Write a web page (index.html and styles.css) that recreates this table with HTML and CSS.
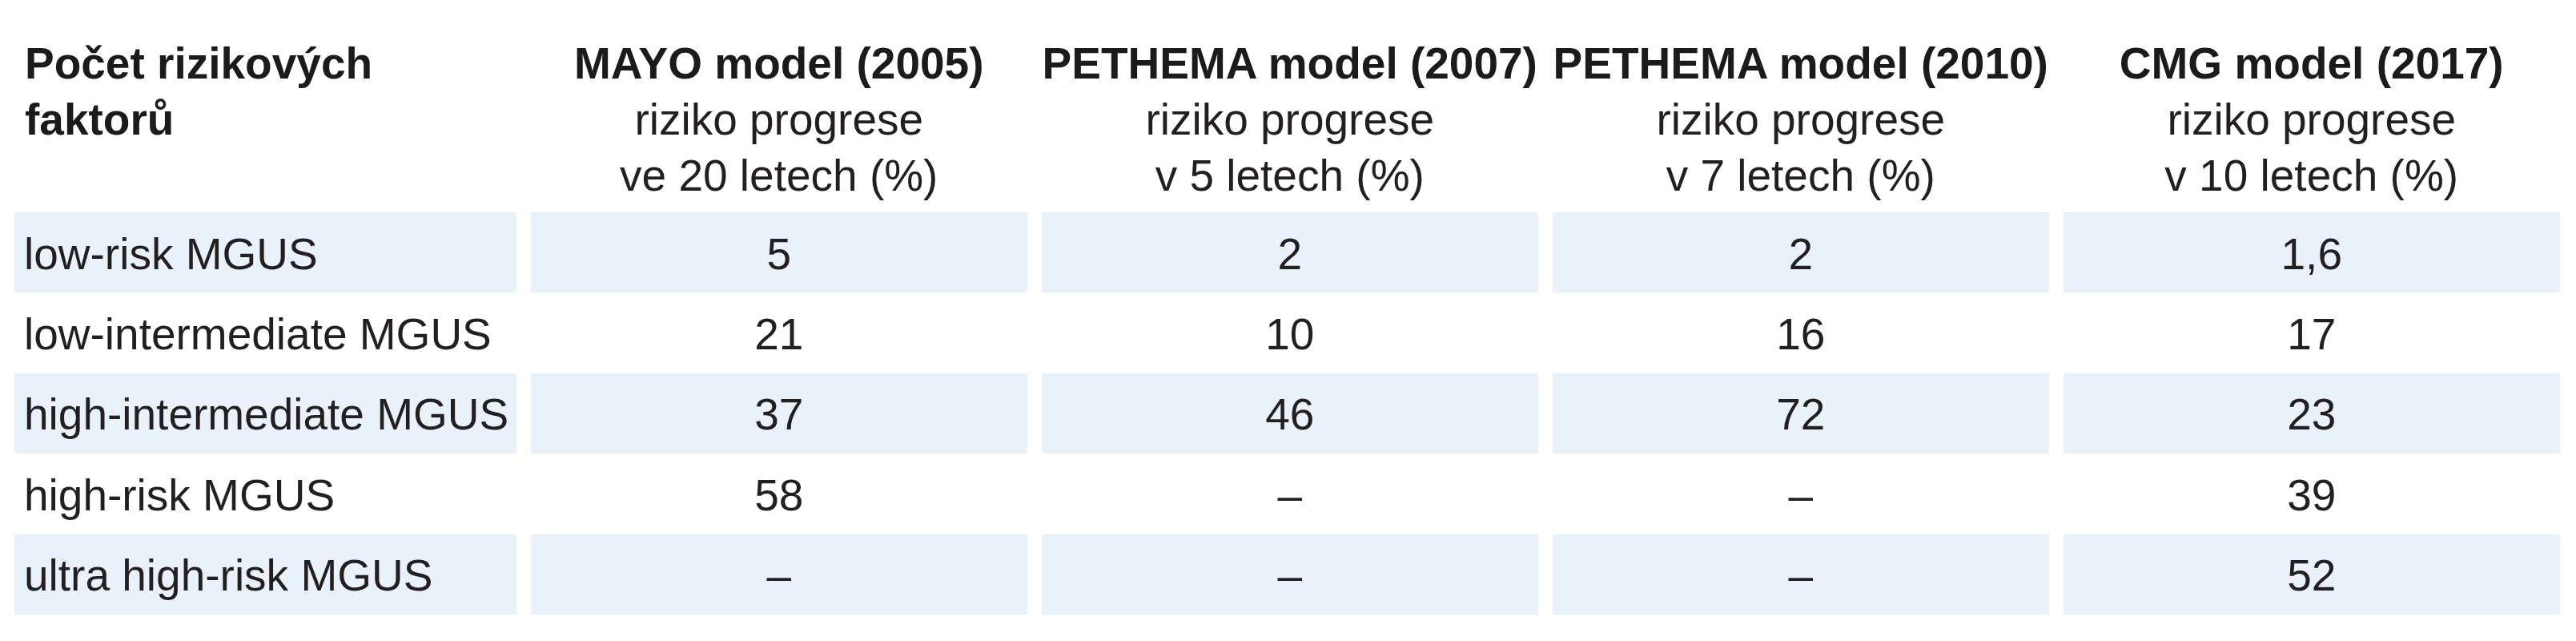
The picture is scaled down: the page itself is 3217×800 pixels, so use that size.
FILE: index.html
```html
<!DOCTYPE html>
<html lang="cs">
<head>
<meta charset="utf-8">
<title>Modely rizika progrese MGUS</title>
<link rel="stylesheet" href="styles.css">
</head>
<body>
<div class="risk-table">
  <div class="row head">
    <div class="cell first"><span class="title">Počet rizikových</span><span class="title">faktorů</span></div>
    <div class="cell"><span class="title">MAYO model (2005)</span><span>riziko progrese</span><span>ve 20 letech (%)</span></div>
    <div class="cell"><span class="title">PETHEMA model (2007)</span><span>riziko progrese</span><span>v 5 letech (%)</span></div>
    <div class="cell"><span class="title">PETHEMA model (2010)</span><span>riziko progrese</span><span>v 7 letech (%)</span></div>
    <div class="cell"><span class="title">CMG model (2017)</span><span>riziko progrese</span><span>v 10 letech (%)</span></div>
  </div>
  <div class="row data shaded">
    <div class="cell label">low-risk MGUS</div>
    <div class="cell">5</div>
    <div class="cell">2</div>
    <div class="cell">2</div>
    <div class="cell">1,6</div>
  </div>
  <div class="row data">
    <div class="cell label">low-intermediate MGUS</div>
    <div class="cell">21</div>
    <div class="cell">10</div>
    <div class="cell">16</div>
    <div class="cell">17</div>
  </div>
  <div class="row data shaded">
    <div class="cell label">high-intermediate MGUS</div>
    <div class="cell">37</div>
    <div class="cell">46</div>
    <div class="cell">72</div>
    <div class="cell">23</div>
  </div>
  <div class="row data">
    <div class="cell label">high-risk MGUS</div>
    <div class="cell">58</div>
    <div class="cell">–</div>
    <div class="cell">–</div>
    <div class="cell">39</div>
  </div>
  <div class="row data shaded">
    <div class="cell label">ultra high-risk MGUS</div>
    <div class="cell">–</div>
    <div class="cell">–</div>
    <div class="cell">–</div>
    <div class="cell">52</div>
  </div>
</div>
</body>
</html>
```
FILE: styles.css
```css
html, body {
  margin: 0;
  padding: 0;
  background: #ffffff;
}

body {
  font-family: "Liberation Sans", Arial, sans-serif;
  font-size: 55px;
  color: #231f20;
}

.risk-table {
  padding: 0 20px 0 18px;
}

.row {
  display: grid;
  grid-template-columns: 627px repeat(4, 1fr);
  column-gap: 17.5px;
}

.head .cell {
  display: flex;
  flex-direction: column;
  align-items: center;
  padding: 44px 0 11px;
  line-height: 70px;
  white-space: nowrap;
}

.head .first {
  align-items: flex-start;
  padding-left: 13px;
}

.title {
  font-weight: bold;
  color: #1c1a1a;
}

.data .cell {
  box-sizing: border-box;
  height: 100.4px;
  padding-top: 3px;
  display: flex;
  align-items: center;
  justify-content: center;
  white-space: nowrap;
}

.data .label {
  justify-content: flex-start;
  padding-left: 12px;
}

.shaded .cell {
  background: #e9f1fa;
}
```
